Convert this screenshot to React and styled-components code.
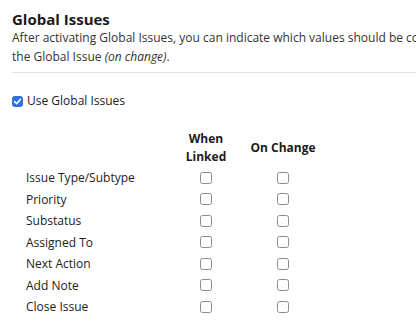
import React from 'react';
import styled, { createGlobalStyle } from 'styled-components';

const GlobalStyle = createGlobalStyle`
  html, body {
    margin: 0;
    padding: 0;
    background: #fff;
    overflow: hidden;
  }
  body {
    font-family: "Open Sans", "Liberation Sans", sans-serif;
    color: #222;
  }
`;

const Page = styled.div`
  width: 416px;
  height: 335px;
  overflow: hidden;
`;

const Header = styled.div`
  padding: 9px 0 0 12px;
`;

const Title = styled.h2`
  margin: 0;
  font-size: 15px;
  font-weight: 700;
  line-height: 20px;
  color: #1b1b1b;
`;

const Description = styled.p`
  margin: -1px 0 0;
  font-size: 12px;
  line-height: 19px;
  white-space: nowrap;
  color: #333;

  em {
    font-style: italic;
  }
`;

const Divider = styled.div`
  margin: 6px 0 0 12px;
  height: 1px;
  background: #e3e3e3;
`;

const Toggle = styled.label`
  display: flex;
  align-items: center;
  gap: 4px;
  margin: 19px 0 0 12px;
  font-size: 12px;
  line-height: 18px;
  color: #222;
`;

const Box = styled.span`
  display: inline-flex;
  align-items: center;
  justify-content: center;
  box-sizing: border-box;
  width: ${p => (p.$checked ? 11 : 12)}px;
  height: ${p => (p.$checked ? 11 : 12)}px;
  border-radius: 2.5px;
  border: 1px solid ${p => (p.$checked ? '#2f6fe0' : '#8c8c8c')};
  background: ${p => (p.$checked ? '#2f6fe0' : '#fff')};
`;

const Grid = styled.div`
  display: grid;
  grid-template-columns: 142px 76px 78px;
  margin: 18px 0 0 26px;
  font-size: 12px;
  color: #222;
`;

const HeadCell = styled.div`
  display: flex;
  align-items: center;
  justify-content: center;
  text-align: center;
  font-weight: 700;
  line-height: 18px;
  height: 39px;
  color: #1b1b1b;
`;

const Label = styled.div`
  height: 21.5px;
  line-height: 21.5px;
`;

const Cell = styled.div`
  height: 21.5px;
  display: flex;
  align-items: center;
  justify-content: center;
`;

const Checkbox = ({ checked }) => (
  <Box $checked={checked}>
    {checked && (
      <svg width="9" height="9" viewBox="0 0 10 10">
        <path d="M1.8 5.2 L4.1 7.4 L8.3 2.6" fill="none" stroke="#fff" strokeWidth="1.8" strokeLinecap="round" strokeLinejoin="round" />
      </svg>
    )}
  </Box>
);

const rows = [
  'Issue Type/Subtype',
  'Priority',
  'Substatus',
  'Assigned To',
  'Next Action',
  'Add Note',
  'Close Issue',
];

export default function App() {
  return (
    <Page>
      <GlobalStyle />
      <Header>
        <Title>Global Issues</Title>
        <Description>
          After activating Global Issues, you can indicate which values should be copied to
          <br />
          the Global Issue <em>(on change)</em>.
        </Description>
      </Header>
      <Divider />
      <Toggle>
        <Checkbox checked />
        Use Global Issues
      </Toggle>
      <Grid>
        <div />
        <HeadCell>When<br />Linked</HeadCell>
        <HeadCell>On Change</HeadCell>
        {rows.map(r => (
          <React.Fragment key={r}>
            <Label>{r}</Label>
            <Cell><Checkbox /></Cell>
            <Cell><Checkbox /></Cell>
          </React.Fragment>
        ))}
      </Grid>
    </Page>
  );
}
